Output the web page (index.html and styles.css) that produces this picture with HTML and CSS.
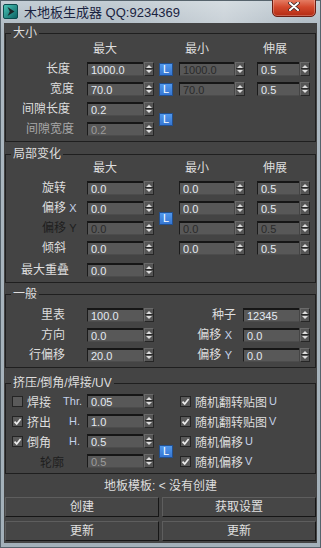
FILE: index.html
```html
<!DOCTYPE html>
<html lang="zh-CN">
<head>
    <meta charset="UTF-8">
    <meta name="viewport" content="width=device-width, initial-scale=1.0">
    <title>木地板生成器</title>
    <link rel="stylesheet" href="styles.css">
</head>
<body>

<div class="window">
    <div class="titlebar">
        <svg class="app-icon" viewBox="0 0 15 15">
            <defs>
                <linearGradient id="teal" x1="0" y1="0" x2="1" y2="1">
                    <stop offset="0" stop-color="#4cc7b8"/>
                    <stop offset="1" stop-color="#0a5f61"/>
                </linearGradient>
            </defs>
            <rect x="0.5" y="0.5" width="14" height="14" rx="1.5" fill="url(#teal)" stroke="#0b4b4d"/>
            <polygon points="4.5,3 11.5,7.5 4.5,12 6.8,7.5" fill="#1b2628"/>
        </svg>
        <span class="title">木地板生成器 QQ:9234369</span>
        <button class="close" type="button">
            <svg viewBox="0 0 12 9" width="12" height="9">
                <path d="M2 1 L10 8 M10 1 L2 8" stroke="#3a2a2a" stroke-width="3.6" stroke-linecap="round"/>
                <path d="M2 1 L10 8 M10 1 L2 8" stroke="#fff" stroke-width="2" stroke-linecap="round"/>
            </svg>
        </button>
    </div>

    <div class="client">

        <!-- 大小 -->
        <fieldset class="group group-size">
            <legend>大小</legend>
            <div class="grid grid-range">
                <span></span><span class="head">最大</span><span></span><span class="head">最小</span><span class="head">伸展</span>

                <label class="lbl">长度</label>
                <div class="spin"><input class="field" value="1000.0"><span class="arrows"></span></div>
                <span class="lock">L</span>
                <div class="spin"><input class="field mid off" value="1000.0" readonly><span class="arrows"></span></div>
                <div class="spin"><input class="field short" value="0.5"><span class="arrows"></span></div>

                <label class="lbl wide">宽度</label>
                <div class="spin"><input class="field" value="70.0"><span class="arrows"></span></div>
                <span class="lock">L</span>
                <div class="spin"><input class="field mid off" value="70.0" readonly><span class="arrows"></span></div>
                <div class="spin"><input class="field short" value="0.5"><span class="arrows"></span></div>

                <label class="lbl">间隙长度</label>
                <div class="spin"><input class="field" value="0.2"><span class="arrows"></span></div>
                <span class="lock span-2">L</span>

                <label class="lbl wide dim">间隙宽度</label>
                <div class="spin"><input class="field dim" value="0.2"><span class="arrows"></span></div>
            </div>
        </fieldset>

        <!-- 局部变化 -->
        <fieldset class="group group-local">
            <legend>局部变化</legend>
            <div class="grid grid-range grid-local">
                <span></span><span class="head">最大</span><span></span><span class="head">最小</span><span class="head">伸展</span>

                <label class="lbl">旋转</label>
                <div class="spin"><input class="field" value="0.0"><span class="arrows"></span></div>
                <span class="lock span-4">L</span>
                <div class="spin"><input class="field mid" value="0.0"><span class="arrows"></span></div>
                <div class="spin"><input class="field short" value="0.5"><span class="arrows"></span></div>

                <label class="lbl">偏移 <span class="axis">X</span></label>
                <div class="spin"><input class="field" value="0.0"><span class="arrows"></span></div>
                <div class="spin"><input class="field mid" value="0.0"><span class="arrows"></span></div>
                <div class="spin"><input class="field short" value="0.5"><span class="arrows"></span></div>

                <label class="lbl off">偏移 <span class="axis">Y</span></label>
                <div class="spin"><input class="field off" value="0.0" readonly><span class="arrows"></span></div>
                <div class="spin"><input class="field mid off" value="0.0" readonly><span class="arrows"></span></div>
                <div class="spin"><input class="field short off" value="0.5" readonly><span class="arrows"></span></div>

                <label class="lbl">倾斜</label>
                <div class="spin"><input class="field" value="0.0"><span class="arrows"></span></div>
                <div class="spin"><input class="field mid" value="0.0"><span class="arrows"></span></div>
                <div class="spin"><input class="field short" value="0.5"><span class="arrows"></span></div>

                <label class="lbl overlap late">最大重叠</label>
                <div class="spin late"><input class="field" value="0.0"><span class="arrows"></span></div>
            </div>
        </fieldset>

        <!-- 一般 -->
        <fieldset class="group group-general">
            <legend>一般</legend>
            <div class="grid grid-general">
                <label class="lbl">里表</label>
                <div class="spin"><input class="field" value="100.0"><span class="arrows"></span></div>
                <label class="lbl lbl-right">种子</label>
                <div class="spin"><input class="field" value="12345"><span class="arrows"></span></div>

                <label class="lbl">方向</label>
                <div class="spin"><input class="field" value="0.0"><span class="arrows"></span></div>
                <label class="lbl lbl-right axis-label">偏移 <span class="axis">X</span></label>
                <div class="spin"><input class="field" value="0.0"><span class="arrows"></span></div>

                <label class="lbl">行偏移</label>
                <div class="spin"><input class="field" value="20.0"><span class="arrows"></span></div>
                <label class="lbl lbl-right axis-label">偏移 <span class="axis">Y</span></label>
                <div class="spin"><input class="field" value="0.0"><span class="arrows"></span></div>
            </div>
        </fieldset>

        <!-- 挤压/倒角/焊接/UV -->
        <fieldset class="group group-extrude">
            <legend>挤压/倒角/焊接/UV</legend>
            <div class="grid grid-extrude">
                <div class="opt">
                    <span class="check"></span>焊接
                    <span class="prefix">Thr.</span>
                </div>
                <div class="spin"><input class="field" value="0.05"><span class="arrows"></span></div>
                <div class="uv"><span class="check on"></span>随机翻转贴图 <span class="axis">U</span></div>

                <div class="opt">
                    <span class="check on"></span>挤出
                    <span class="prefix h">H.</span>
                </div>
                <div class="spin"><input class="field" value="1.0"><span class="arrows"></span></div>
                <div class="uv"><span class="check on"></span>随机翻转贴图 <span class="axis">V</span></div>

                <div class="opt">
                    <span class="check on"></span>倒角
                    <span class="prefix h">H.</span>
                </div>
                <div class="spin"><input class="field" value="0.5"><span class="arrows"></span></div>
                <span class="lock span-2">L</span>
                <div class="uv"><span class="check on"></span>随机偏移 <span class="axis">U</span></div>

                <div class="opt off indent">轮廓</div>
                <div class="spin"><input class="field dim" value="0.5"><span class="arrows"></span></div>
                <div class="uv"><span class="check on"></span>随机偏移 <span class="axis">V</span></div>
            </div>
        </fieldset>

        <p class="status">地板模板: &lt; 没有创建</p>

        <div class="actions">
            <button class="btn" type="button">创建</button>
            <button class="btn" type="button">获取设置</button>
            <button class="btn" type="button">更新</button>
            <button class="btn" type="button">更新</button>
        </div>
    </div>
</div>

</body>
</html>
```

FILE: styles.css
```css
* {
    box-sizing: border-box;
}

body {
    margin: 0;
    background-color: #444;
    font-family: "Liberation Sans", "Noto Sans CJK SC", sans-serif;
    font-size: 12px;
    color: #dedede;
}

/* window frame */
.window {
    width: 321px;
    height: 548px;
    display: flex;
    flex-direction: column;
    padding: 0 3px 4px;
    border: 1px solid #56636c;
    background: linear-gradient(to bottom, #c4ced5, #adb9c2 30px, #a3b0b9);
}

.titlebar {
    height: 22px;
    flex-shrink: 0;
    display: flex;
    align-items: flex-start;
    margin: 0 -3px;
    background: linear-gradient(to right, rgba(255,255,255,0) 35%, rgba(255,255,255,0.3) 70%, rgba(255,255,255,0) 95%);
}

.app-icon {
    width: 15px;
    height: 15px;
    margin: 3px 0 0 2px;
    flex-shrink: 0;
}

.title {
    margin: 4px 0 0 6px;
    font-size: 13px;
    line-height: 15px;
    color: #1a2340;
    white-space: nowrap;
}

.close {
    margin: -4px 4px 0 auto;
    width: 44px;
    height: 20px;
    padding: 4px 0 0;
    display: flex;
    justify-content: center;
    align-items: flex-start;
    border: 1px solid #6b1d12;
    border-radius: 0 0 5px 5px;
    background: linear-gradient(to bottom, #e98a72, #d4492d 50%, #b32b13);
    box-shadow: inset 0 0 0 1px rgba(255,255,255,0.25);
}

.client {
    flex: 1;
    display: flex;
    flex-direction: column;
    padding: 4px 1px 0;
    background-color: #444;
}

/* group boxes */
.group {
    margin: 0;
    padding: 3px 0 5px;
    border: 1px solid #1f1f1f;
    min-inline-size: 0;
}

.group legend {
    margin-left: 5px;
    padding: 0 2px;
    font-size: 12px;
    line-height: 12px;
}

.group-local {
    margin-top: 6px;
    padding-top: 1px;
}

.group-general {
    margin-top: 5px;
    padding-top: 8px;
}

.group-extrude {
    margin-top: 9px;
    padding-top: 5px;
}

.grid {
    display: grid;
    grid-auto-rows: 14px;
    row-gap: 6px;
    align-items: center;
}

.grid-range {
    grid-template-columns: 81px 72px 20px 78px 53px;
}

.grid-range .lbl {
    grid-column: 1;
}

.grid-local {
    grid-template-rows: repeat(5, 14px) 16px;
}

.grid-general {
    grid-template-columns: 81px 72px 84px 67px;
}

.grid-extrude {
    grid-template-columns: 81px 72px 20px 1fr;
}

.grid-extrude .opt {
    grid-column: 1;
}

.late {
    align-self: end;
}

.head {
    padding-left: 6px;
    line-height: 14px;
}

.lbl {
    text-align: right;
    padding-right: 17px;
    line-height: 14px;
    white-space: nowrap;
}

.lbl.wide {
    padding-right: 13px;
}

.grid-local .lbl {
    text-align: left;
    padding: 0 0 0 36px;
}

.grid-local .lbl.overlap {
    padding-left: 15px;
}

.grid-general .lbl {
    padding-right: 22px;
}

.grid-general .lbl-right {
    padding-right: 7px;
}

.grid-general .axis-label {
    padding-right: 11px;
}

.axis {
    font-size: 11px;
    color: #c4d2ea;
}

.dim {
    color: #a8a8a8;
}

.off,
.off .axis {
    color: #1e1e1e;
}

/* spinner fields */
.spin {
    display: flex;
    gap: 1px;
    height: 14px;
}

.field {
    width: 56px;
    height: 14px;
    margin: 0;
    padding: 0 0 0 3px;
    border: 0;
    border-top: 2px solid #161616;
    border-left: 1px solid #1c1c1c;
    border-bottom: 1px solid #4c4c4c;
    background-color: #585858;
    color: #e4eaf2;
    font-family: "Liberation Sans", sans-serif;
    font-size: 11px;
    line-height: 11px;
    outline: none;
}

.field.mid {
    width: 55px;
}

.field.short {
    width: 42px;
}

.field.dim {
    color: #9c9c9c;
}

.field.off {
    color: #2a2a2a;
}

.arrows {
    width: 10px;
    height: 14px;
    display: flex;
    flex-direction: column;
    justify-content: space-between;
    align-items: center;
    padding: 2px 0;
    border: 1px solid;
    border-color: #6a6a6a #262626 #262626 #6a6a6a;
    background: linear-gradient(to bottom, #555 0 5px, #2a2a2a 5px 6px, #555 6px);
}

.arrows::before {
    content: "";
    border-left: 3px solid transparent;
    border-right: 3px solid transparent;
    border-bottom: 3px solid #dcdcdc;
}

.arrows::after {
    content: "";
    border-left: 3px solid transparent;
    border-right: 3px solid transparent;
    border-top: 3px solid #dcdcdc;
}

/* lock toggles */
.lock {
    width: 14px;
    height: 13px;
    border: 1px solid #22508f;
    background: linear-gradient(to bottom, #5198ec, #3676d2);
    color: #fff;
    font-family: "Liberation Sans", sans-serif;
    font-size: 11px;
    line-height: 11px;
    text-align: center;
}

.span-2 {
    grid-row: span 2;
}

.span-4 {
    grid-row: span 4;
}

/* check options */
.opt {
    display: flex;
    align-items: center;
    gap: 4px;
    height: 14px;
    padding-left: 6px;
    white-space: nowrap;
}

.opt.indent {
    padding-left: 34px;
}

.prefix {
    margin-left: auto;
    padding-right: 5px;
    font-size: 11px;
    color: #c4d2ea;
}

.prefix.h {
    padding-right: 7px;
}

.uv {
    grid-column: 4;
    display: flex;
    align-items: center;
    gap: 4px;
    padding-left: 1px;
    white-space: nowrap;
}

.uv .axis {
    margin-left: -2px;
}

.check {
    width: 11px;
    height: 11px;
    flex-shrink: 0;
    border: 1px solid #242424;
    background-color: #5a5a5a;
}

.check.on {
    background: #5a5a5a url("data:image/svg+xml,%3Csvg xmlns='http://www.w3.org/2000/svg' viewBox='0 0 9 9'%3E%3Cpath d='M1.5 4.6 L3.7 6.9 L7.6 1.9' fill='none' stroke='%23ececec' stroke-width='1.7'/%3E%3C/svg%3E") center / 9px 9px no-repeat;
}

/* bottom */
.status {
    margin: 5px 0 0;
    text-align: center;
    line-height: 14px;
}

.actions {
    display: grid;
    grid-template-columns: 1fr 1fr;
    gap: 4px 3px;
    margin-top: 4px;
}

.btn {
    height: 20px;
    padding: 0;
    border: 1px solid;
    border-color: #5e5e5e #161616 #161616 #5e5e5e;
    background-color: #464646;
    color: #e0e0e0;
    font-family: "Liberation Sans", "Noto Sans CJK SC", sans-serif;
    font-size: 12px;
    line-height: 17px;
}
```
